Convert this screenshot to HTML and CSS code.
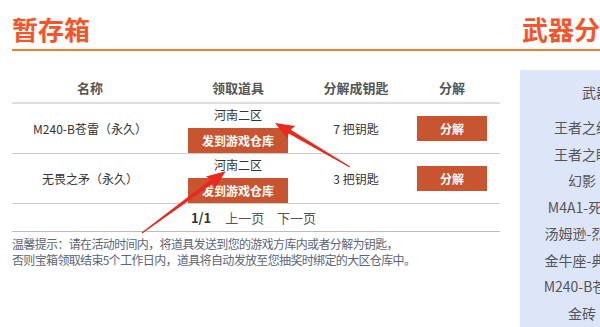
FILE: index.html
```html
<!DOCTYPE html>
<html lang="zh">
<head>
    <meta charset="UTF-8">
    <meta name="viewport" content="width=device-width, initial-scale=1.0">
    <title>暂存箱</title>
    <link rel="stylesheet" href="styles.css">
</head>
<body>

    <div class="page">
        <div class="box-left">
            <h2 class="title">暂存箱</h2>

            <table class="store-table">
                <tr>
                    <th class="col-name">名称</th>
                    <th class="col-zone">领取道具</th>
                    <th class="col-key">分解成钥匙</th>
                    <th class="col-op">分解</th>
                </tr>
                <tr>
                    <td>M240-B苍雷（永久）</td>
                    <td>
                        <div class="zone">河南二区</div>
                        <button class="btn btn-send">发到游戏仓库</button>
                    </td>
                    <td>7 把钥匙</td>
                    <td><button class="btn btn-split">分解</button></td>
                </tr>
                <tr>
                    <td>无畏之矛（永久）</td>
                    <td>
                        <div class="zone">河南二区</div>
                        <button class="btn btn-send">发到游戏仓库</button>
                    </td>
                    <td>3 把钥匙</td>
                    <td><button class="btn btn-split">分解</button></td>
                </tr>
            </table>

            <div class="pager">
                <b>1/1</b>
                <a href="#" class="prev">上一页</a>
                <a href="#" class="next">下一页</a>
            </div>

            <p class="tip">温馨提示：请在活动时间内，将道具发送到您的游戏方库内或者分解为钥匙，<br>否则宝箱领取结束5个工作日内，道具将自动发放至您抽奖时绑定的大区仓库中。</p>
        </div>

        <div class="box-right">
            <h2 class="title">武器分类</h2>
            <div class="weapon-list">
                <div class="weapon-head">武器名称</div>
                <div class="weapon">王者之纹</div>
                <div class="weapon">王者之眼</div>
                <div class="weapon">幻影</div>
                <div class="weapon">M4A1-死神</div>
                <div class="weapon">汤姆逊-烈龙</div>
                <div class="weapon">金牛座-典藏</div>
                <div class="weapon">M240-B苍雷</div>
                <div class="weapon">金砖</div>
            </div>
        </div>
    </div>

    <!-- 标注箭头 -->
    <svg class="marks" width="600" height="327" viewBox="0 0 600 327">
        <polygon transform="translate(350,167) rotate(210.4)" points="0,-0.6 70,-2.2 68,-7.5 87,0 68,7.5 70,2.2 0,0.6"/>
        <polygon transform="translate(142,233) rotate(-36.4)" points="0,-0.6 87,-2.2 85,-7.5 104,0 85,7.5 87,2.2 0,0.6"/>
    </svg>

</body>
</html>
```

FILE: styles.css
```css
html, body {
    margin: 0;
    padding: 0;
    overflow: hidden;
}
body {
    font-family: "Noto Sans CJK SC", "Microsoft YaHei", sans-serif;
    font-size: 13px;
    color: #333;
    background: #fff;
    position: relative;
    width: 600px;
    height: 327px;
}
.page {
    display: flex;
    padding-left: 12px;
}
.box-left {
    width: 508px;
    flex-shrink: 0;
}
.box-right {
    width: 88px;
    flex-shrink: 0;
    overflow: hidden;
}
.title {
    margin: 0;
    padding: 14px 0 5px 0;
    font-size: 26px;
    line-height: 30px;
    font-weight: bold;
    color: #f4552b;
    border-bottom: 2px solid #f27d2c;
    white-space: nowrap;
}
.box-right .title {
    padding-left: 2px;
}
.store-table {
    width: 488px;
    margin-top: 21px;
    border-collapse: separate;
    border-spacing: 0;
    table-layout: fixed;
}
.store-table th {
    height: 30px;
    padding: 0;
    font-size: 13px;
    font-weight: bold;
    color: #555;
    border-bottom: 2px solid #ddd;
    text-align: center;
}
.col-name { width: 156px; }
.col-zone { width: 140px; }
.col-key { width: 96px; }
.col-op { width: 96px; }
.store-table td {
    height: 49px;
    padding: 0;
    font-size: 12px;
    text-align: center;
    vertical-align: middle;
    border-bottom: 1px solid #ccc;
}
.zone {
    padding-top: 1px;
    line-height: 20px;
}
.btn {
    display: block;
    margin: 0 auto;
    padding: 0;
    height: 25px;
    border: none;
    border-radius: 0;
    background-color: #c8552f;
    color: #fff;
    font-family: inherit;
    font-size: 12px;
    font-weight: bold;
    cursor: pointer;
}
.btn-send {
    width: 100px;
    margin-top: 3px;
}
.btn-split {
    width: 70px;
}
.pager {
    width: 488px;
    height: 27px;
    line-height: 27px;
    text-align: center;
    border-bottom: 1px solid #bbb;
    font-size: 13px;
}
.pager b {
    color: #333;
    margin-right: 6px;
}
.pager a {
    color: #555;
    text-decoration: none;
    margin: 0 5px;
}
.tip {
    margin: 4px 0 0 0;
    font-size: 12px;
    letter-spacing: -0.65px;
    line-height: 16px;
    color: #5b6578;
    white-space: nowrap;
}
.weapon-list {
    margin-top: 19px;
    width: 124px;
    height: 257px;
    background-color: #dde5f9;
    color: #555;
    font-size: 14px;
}
.weapon-head {
    height: 44px;
    line-height: 44px;
    padding-left: 62px;
    white-space: nowrap;
}
.weapon {
    height: 26.5px;
    line-height: 26.5px;
    text-align: center;
    white-space: nowrap;
}
.marks {
    position: absolute;
    top: 0;
    left: 0;
    pointer-events: none;
}
.marks polygon {
    fill: #e8291f;
}
```
